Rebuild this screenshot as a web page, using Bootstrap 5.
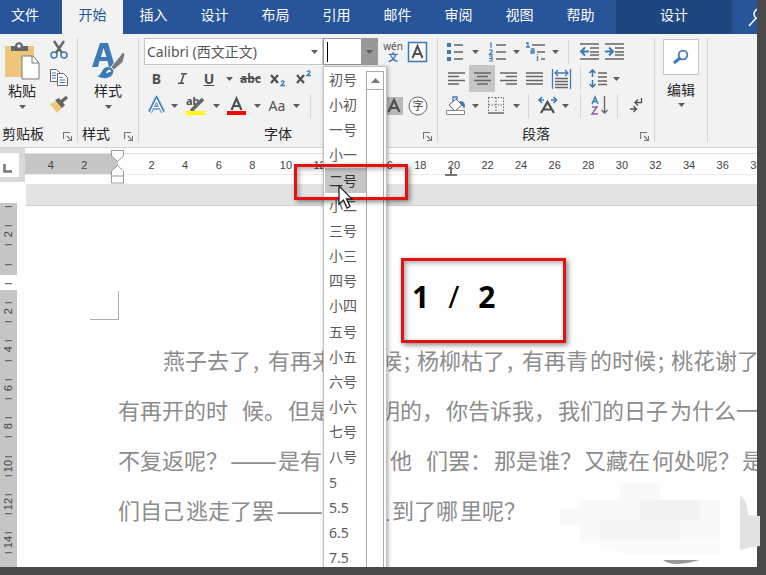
<!DOCTYPE html>
<html lang="zh-CN">
<head>
<meta charset="utf-8">
<meta name="viewport" content="width=device-width, initial-scale=1">
<title>文档</title>
<link href="https://cdn.jsdelivr.net/npm/bootstrap@5.3.0/dist/css/bootstrap.min.css" rel="stylesheet">
<script src="https://cdn.jsdelivr.net/npm/bootstrap@5.3.0/dist/js/bootstrap.bundle.min.js"></script>
<style>
body { font-family: "Noto Sans CJK SC", sans-serif; background: #494949; color: #262626; font-size: 14px; line-height: 20px; }
button { background: none; border: 0; padding: 0; color: inherit; display: flex; align-items: center; justify-content: center; }
svg { display: block; flex: none; overflow: visible; }
.app { margin: 0 9px 8px 0; background: #fefefe; }
/* tabs */
.tabs { background: #285599; height: 34px; }
.tabs a { color: #fff; flex: none; width: 61px; height: 34px; padding-top: 4px; text-align: center; text-decoration: none; }
.tabs a.first { width: 62px; padding-right: 12px; }
.tabs a.on { background: #f2f2f2; color: #285599; }
.tabs a.ctx { background: #1e477f; width: 116px; margin-left: 5px; }
/* ribbon */
.ribbon { background: #f2f2f2; height: 114px; border-bottom: 1px solid #d2d2d2; padding-top: 4px; }
.grp { border-right: 1px solid #d4d4d4; height: 104px; flex: none; }
.g-clip { width: 78px; } .g-style { width: 61px; } .g-font { width: 299px; } .g-para { width: 217px; } .g-edit { width: 53px; }
.tools { height: 82px; }
.big { width: 44px; height: 82px; flex-direction: column; justify-content: flex-start; padding-top: 4px; }
.big svg:last-child { margin-top: 5px; }
.side { width: 30px; gap: 10px; padding-top: 3px; }
.foot { height: 22px; padding: 3px 5px 0 2px; }
.foot span { line-height: 20px; }
.launch { height: 18px; align-items: flex-end; }
.trow { display: grid; height: 27px; align-items: center; padding-left: 5px; }
.trow button, .trow i { justify-self: center; }
.f2 { grid-template-columns: 25px 27px 26px 14px 29px 26px 26px; }
.f3 { grid-template-columns: 25px 11px 32px 9px 30px 12px 28px 10px 18px 63px 22px 28px; }
.p1 { grid-template-columns: 24px 16px 28px 10px 30px 8px 19px 22px 28px; }
.p2 { grid-template-columns: 26px 26px 26px 27px 26px 12px 23px 14px; }
.p3 { grid-template-columns: 26px 12px 30px 10px 15px 24px 10px 20px 18px 18px 20px; }
.vline { width: 1px; height: 24px; background: #d4d4d4; }
.ltr { font-family: "Noto Sans", sans-serif; color: #505050; font-size: 14px; line-height: 20px; }
.abc { font-size: 12px; }
.shade { background: #c6c6c6; width: 26px; height: 27px; }
.combo { height: 27px; background: #fff; border: 1px solid #c6c6c6; width: 179px; margin-left: 5px; }
.combo input { border: 0; outline: 0; background: none; width: 100%; min-width: 0; padding: 0 2px; color: #555; font-family: "Noto Sans", "Noto Sans CJK SC", sans-serif; font-size: 14px; }
.combo button { width: 16px; flex: none; }
.combo.size { width: 55px; margin: 0; border-color: #999; }
.combo.size button { background: #999; }
.caret-bar { position: absolute; left: 3px; top: 3px; width: 1px; height: 20px; background: #000; }
.phon { flex-direction: column; width: 30px; font-size: 10px; line-height: 11px; color: #505050; font-family: "Noto Sans", "Noto Sans CJK SC", sans-serif; }
.phon b { color: #3f7ab8; }
.find { width: 36px; height: 36px; background: #fff; border: 1px solid #c6c6c6; margin-top: 1px; }
/* rulers */
.rulers { height: 36px; }
.stop { width: 25px; height: 34px; background: #d9d9d9; padding: 5px 6px 5px 0; }
.stop span { background: #fefefe; height: 24px; padding: 11px 0 0 3px; display: block; }
.hruler { margin-top: 5px; height: 22px; border-top: 1px solid #dedede; border-bottom: 2px solid #ececec; font: 11px/22px "Liberation Sans", sans-serif; color: #444; }
.scale { margin-right: -16px; padding-left: 9px; height: 20px; background: linear-gradient(90deg, #c6c6c6 93px, #fefefe 93px); }
.scale span { flex: 1 1 0; text-align: center; }
.indent { left: 86px; top: -4px; }
.tabmark { left: 420px; top: 13px; }
.vruler { width: 17px; margin-top: 19px; padding-top: 3px; background: linear-gradient(#c6c6c6 72px, #fefefe 72px 87px, #c6c6c6 87px); font: 11px/17px "Liberation Sans", sans-serif; color: #444; margin-bottom: -4px; }
.vruler span { flex: 1 1 0; min-height: 0; writing-mode: vertical-rl; transform: rotate(180deg); text-align: center; background: linear-gradient(#555, #555) 5px 100% / 7px 1px no-repeat; }
.band { height: 22px; background: #e4e4e4; border-bottom: 1px solid #cfcfcf; }
.sheet { padding-left: 9px; }
.crop { width: 29px; height: 29px; border: solid #b0b0b0; border-width: 0 1px 1px 0; margin: 85px 0 0 64px; }
.pageno { font: 700 30px/40px "Noto Sans", sans-serif; color: #000; gap: 19px; margin: -43px 0 0 386px; }
.pageno span { font-weight: 400; }
.story { color: #8c8c8c; font-size: 22px; line-height: 50px; font-weight: 400; padding-left: 92px; margin-top: 17px; }
.story p { display: flex; gap: 2px; margin: 0; white-space: nowrap; height: 50px; }
.story .first-line { padding-left: 45px; }
.story i { font-style: normal; width: 13px; flex: none; }
.story i.semi { width: 11px; }
.story i.sp { width: 10px; }
.story .dash { width: 46px; flex: none; font-size: 28px; }
/* overlays */
.sizes { left: 323px; top: 66px; bottom: -4px; width: 64px; background: #fff; border: 1px solid #c0c0c0; box-shadow: 1px 1px 4px #0005; }
.sizes ul { margin: 0; padding: 0; width: 42px; list-style: none; display: flex; flex-direction: column; }
.sizes li { flex: 1 1 0; min-height: 0; padding-left: 4px; line-height: 25px; color: #5c5c5c; margin-left: 1px; font-family: "Noto Sans", "Noto Sans CJK SC", sans-serif; font-weight: 400; }
.sizes li.pick { background: #c6c6c6; color: #333; }
.bar { width: 18px; margin-top: 4px; border: 1px solid #aaa; }
.bar button { width: 16px; height: 18px; border-bottom: 1px solid #aaa; }
.ring { border: 3px solid #e3110f; box-shadow: 2px 2px 5px #0007, inset 2px 2px 5px #0005; }
.ring-a { left: 294px; top: 164px; width: 114px; height: 36px; }
.ring-b { left: 401px; top: 258px; width: 165px; height: 85px; }
.pointer { left: 338px; top: 185px; }
.smudge { right: 0; bottom: 0; }
.spill { right: 6px; bottom: 25px; }
</style>
</head>
<body class="vh-100 overflow-hidden d-flex flex-column position-relative">
<svg width="0" height="0" class="position-absolute">
<defs>
<symbol id="dn" viewBox="0 0 7 4"><path d="M0 0h7L3.500 4z" fill="#5c5c5c"/></symbol>
<symbol id="lc" viewBox="0 0 9 9"><path d="M.5 7V.5H7M4 4l4 4M8.500 4v4.500H4" fill="none" stroke="#777" stroke-width="1.200"/></symbol>
</defs>
</svg>
<div class="app flex-fill d-flex flex-column position-relative overflow-hidden">
<nav class="tabs d-flex flex-shrink-0 overflow-hidden">
<a class="first" href="#">文件</a><a class="on" href="#">开始</a><a href="#">插入</a><a href="#">设计</a><a href="#">布局</a><a href="#">引用</a><a href="#">邮件</a><a href="#">审阅</a><a href="#">视图</a><a href="#">帮助</a><a class="ctx" href="#">设计</a>
<button class="ms-3 flex-shrink-0" aria-label="搜索"><svg width="18" height="18" fill="none" stroke="#fff" stroke-width="1.500"><circle cx="11" cy="6" r="5"/><path d="M8 10l-7 8"/></svg></button>
</nav>

<div class="ribbon d-flex flex-shrink-0">
<section class="grp g-clip">
<div class="tools d-flex">
<button class="big"><svg width="34" height="38"><path d="M0 4h29v31H0z" fill="#edc57b"/><path d="M6 9V4h4c0-5 8-5 8 0h5v5z" fill="#666"/><circle cx="14" cy="4" r="1.800" fill="#f2f2f2"/><path d="M17 14h11l6 7v16H17z" fill="#fff" stroke="#777"/><path d="M27 14v7h7" fill="none" stroke="#777"/></svg><span>粘贴</span><svg width="7" height="4"><use href="#dn"/></svg></button>
<div class="side d-flex flex-column align-items-center">
<button aria-label="剪切"><svg width="18" height="18" fill="none"><path d="M4 0l8 12M14 0L6 12" stroke="#666" stroke-width="2.400"/><circle cx="4" cy="14" r="3" stroke="#3f7ab8" stroke-width="1.500"/><circle cx="14" cy="14" r="3" stroke="#3f7ab8" stroke-width="1.500"/></svg></button>
<button aria-label="复制"><svg width="18" height="17" fill="#fff" stroke="#666"><path d="M.5.5h6l3 3v9h-9z"/><path d="M2 4h4M2 6.500h4M2 9h4" stroke="#3f7ab8"/><path d="M7.500 4.500h6l4 4v8h-10z"/><path d="M9.500 8.500h3M9.500 11h6M9.500 13.500h6" stroke="#3f7ab8"/></svg></button>
<button aria-label="格式刷"><svg width="19" height="17"><path d="M0 8l7-3 6 6-6 6z" fill="#edc57b"/><path d="M5 4l4-2 6 7-3 3z" fill="#666"/><path d="M11 6l6-5" stroke="#666" stroke-width="3.500"/></svg></button>
</div>
</div>
<div class="foot d-flex justify-content-between"><span>剪贴板</span><button class="launch" aria-label="剪贴板设置"><svg width="9" height="9"><use href="#lc"/></svg></button></div>
</section>

<section class="grp g-style">
<div class="tools d-flex justify-content-center">
<button class="big"><svg width="34" height="38"><path fill-rule="evenodd" d="M9 1h8l7 24h-6l-1.500-6H8.500L7 25H1zM12.500 6L10 15h5.500z" fill="#3f7ab8"/><path d="M20 25L32 10l2 2-2 8-9 8z" fill="#7a7a7a" stroke="#f2f2f2"/><path d="M6 34c5 0 4-8 10-9 6 0 8 4 5 8-3 4-10 4-15 1z" fill="#3f7ab8"/><path d="M16 31c1-3 3-3 3-1" fill="none" stroke="#fff" stroke-width="2"/></svg><span>样式</span><svg width="7" height="4"><use href="#dn"/></svg></button>
</div>
<div class="foot d-flex justify-content-between ps-1"><span>样式</span><button class="launch" aria-label="样式设置"><svg width="9" height="9"><use href="#lc"/></svg></button></div>
</section>

<section class="grp g-font">
<div class="tools">
<div class="d-flex">
<div class="combo d-flex"><input aria-label="字体" value="Calibri (西文正文)"><button aria-label="选择字体"><svg width="7" height="4"><use href="#dn"/></svg></button></div>
<div class="combo size d-flex position-relative"><input aria-label="字号"><span class="caret-bar"></span><button aria-label="选择字号"><svg width="7" height="4"><use href="#dn"/></svg></button></div>
<button class="phon" aria-label="拼音指南"><span>wén</span><b>文</b></button>
<button aria-label="字符边框"><svg width="20" height="20"><path d="M.5.5h18v19H.5z" fill="#f8f8f8" stroke="#3f7ab8" stroke-width="1.500"/><path d="M4.500 16L9.500 4l5 12M6.500 12h6" fill="none" stroke="#505050" stroke-width="2"/></svg></button>
</div>
<div class="trow f2">
<button class="ltr"><b>B</b></button><button class="ltr fw-bold" aria-label="倾斜"><svg width="11" height="11"><path d="M4 .7h6M1 10.300h6M7 1L4 10" stroke="#505050" stroke-width="1.500"/></svg></button><button class="ltr fw-bold text-decoration-underline">U</button><button aria-label="下划线"><svg width="7" height="4"><use href="#dn"/></svg></button>
<button class="ltr"><s class="fw-bold abc">abc</s></button>
<button aria-label="下标"><svg width="16" height="16" fill="none"><path d="M1 4l7 8M8 4l-7 8" stroke="#505050" stroke-width="2.200"/><path d="M11 11c1-2 3-1 3 0s-2 2-3 3.500h4" stroke="#3f7ab8" stroke-width="1.300"/></svg></button>
<button aria-label="上标"><svg width="16" height="16" fill="none"><path d="M1 4l7 8M8 4l-7 8" stroke="#505050" stroke-width="2.200"/><path d="M11 1c1-2 3-1 3 0s-2 2-3 3.500h4" stroke="#3f7ab8" stroke-width="1.300"/></svg></button>
</div>
<div class="trow f3">
<button aria-label="文本效果"><svg width="17" height="17"><path d="M2 15L8.500 2 15 15M5 10.500h7" fill="none" stroke="#a9c8e8" stroke-width="5" stroke-linejoin="round"/><path d="M2 15L8.500 2 15 15M5 10.500h7" fill="none" stroke="#3f7ab8" stroke-width="3.500"/><path d="M2.500 15L8.500 3l6 12M5 10.500h7" fill="none" stroke="#fff" stroke-width="1.500"/></svg></button>
<button aria-label="更多文本效果"><svg width="7" height="4"><use href="#dn"/></svg></button>
<button aria-label="突出显示"><svg width="20" height="20"><text x="0" y="9" font-family="Noto Sans" font-size="11" font-weight="700" fill="#505050">ab</text><path d="M17 3l-9 9-3 3" stroke="#666" stroke-width="3.500"/><path d="M0 15h19v4H0z" fill="#ff0"/></svg></button>
<button aria-label="突出显示颜色"><svg width="7" height="4"><use href="#dn"/></svg></button>
<button aria-label="字体颜色"><svg width="19" height="20"><path d="M4.500 14L9.500 2.500 14.500 14M6.500 10h6" fill="none" stroke="#505050" stroke-width="2.200"/><path d="M0 15h19v4H0z" fill="#f00"/></svg></button>
<button aria-label="选择字体颜色"><svg width="7" height="4"><use href="#dn"/></svg></button>
<button class="ltr">Aa</button><button aria-label="更改大小写"><svg width="7" height="4"><use href="#dn"/></svg></button>
<i class="vline"></i><i></i>
<button aria-label="字符底纹"><svg width="20" height="18"><path d="M0 0h20v18H0z" fill="#b9b9b9"/><path d="M5.500 15L11 3l5.500 12M7.500 11h7" fill="none" stroke="#505050" stroke-width="2.200"/></svg></button>
<button aria-label="带圈字符"><svg width="20" height="20"><circle cx="10" cy="10" r="9" fill="#fafafa" stroke="#666"/><text x="10" y="14" text-anchor="middle" font-family="Noto Sans CJK SC" font-size="11" fill="#444">字</text></svg></button>
</div>
</div>
<div class="foot d-flex justify-content-between"><span class="flex-fill text-center pe-2">字体</span><button class="launch" aria-label="字体设置"><svg width="9" height="9"><use href="#lc"/></svg></button></div>
</section>

<section class="grp g-para">
<div class="tools">
<div class="trow p1">
<button aria-label="项目符号"><svg width="16" height="18"><path d="M0 0h4v4H0zM0 7h4v4H0zM0 14h4v4H0z" fill="#3f7ab8"/><path d="M7 2h9M7 9h9M7 16h9" stroke="#666" stroke-width="1.300"/></svg></button>
<button aria-label="项目符号库"><svg width="7" height="4"><use href="#dn"/></svg></button>
<button aria-label="编号"><svg width="17" height="20"><path d="M1 1h1v5M0 8h3v2L.5 12.500H4M0 14h3v5H0M0 16.500h3" fill="none" stroke="#3f7ab8" stroke-width="1.200"/><path d="M7 3h10M7 10h10M7 17h10" stroke="#666" stroke-width="1.300"/></svg></button>
<button aria-label="编号库"><svg width="7" height="4"><use href="#dn"/></svg></button>
<button aria-label="多级列表"><svg width="20" height="20"><path d="M0 1h2v4M0 5h4M5 7h3v4H5V9h3M11.500 14v5M11.500 12v1" fill="none" stroke="#3f7ab8" stroke-width="1.300"/><path d="M6 3h13M11 10h8M15 17h4" stroke="#666" stroke-width="1.300"/></svg></button>
<button aria-label="列表库"><svg width="7" height="4"><use href="#dn"/></svg></button>
<i class="vline"></i>
<button aria-label="减少缩进"><svg width="19" height="17"><path d="M0 1h19M10 5h9M10 9h9M10 12h9M0 16h19" stroke="#666" stroke-width="1.300"/><path d="M9 8.500H1M5 4.500l-4 4 4 4" fill="none" stroke="#3f7ab8" stroke-width="2"/></svg></button>
<button aria-label="增加缩进"><svg width="19" height="17"><path d="M0 1h19M10 5h9M10 9h9M10 12h9M0 16h19" stroke="#666" stroke-width="1.300"/><path d="M0 8.500h8M4 4.500l4 4-4 4" fill="none" stroke="#3f7ab8" stroke-width="2"/></svg></button>
</div>
<div class="trow p2">
<button aria-label="左对齐"><svg width="17" height="13"><path d="M0 1h17M0 4.500h11M0 8.500h17M0 12h11" stroke="#666" stroke-width="1.300"/></svg></button>
<button class="shade" aria-label="居中"><svg width="17" height="13"><path d="M0 1h17M3 4.500h11M0 8.500h17M3 12h11" stroke="#666" stroke-width="1.300"/></svg></button>
<button aria-label="右对齐"><svg width="17" height="13"><path d="M0 1h17M6 4.500h11M0 8.500h17M6 12h11" stroke="#666" stroke-width="1.300"/></svg></button>
<button aria-label="两端对齐"><svg width="17" height="13"><path d="M0 1h17M0 4.500h17M0 8.500h17M0 12h17" stroke="#666" stroke-width="1.300"/></svg></button>
<button aria-label="分散对齐"><svg width="19" height="20"><path d="M.5 0v20M18.500 0v20M3 4h13M6 1L3 4l3 3M13 1l3 3-3 3" fill="none" stroke="#3f7ab8" stroke-width="1.300"/><path d="M3 9.500h13M3 12.500h13M3 15.500h13M3 18.500h13" stroke="#666" stroke-width="1.300"/></svg></button>
<i class="vline"></i>
<button aria-label="行距"><svg width="18" height="19"><path d="M3.500 1v7M.5 4l3-3 3 3M3.500 11v7M.5 15l3 3 3-3" fill="none" stroke="#3f7ab8" stroke-width="1.600"/><path d="M9 4h9M9 8h9M9 12h9M9 15.500h9" stroke="#666" stroke-width="1.300"/></svg></button>
<button aria-label="行距选项"><svg width="7" height="4"><use href="#dn"/></svg></button>
</div>
<div class="trow p3">
<button aria-label="底纹"><svg width="20" height="19"><path d="M7 6V1h4v7" fill="none" stroke="#3f7ab8" stroke-width="1.300"/><path d="M3 9l7-6 6 6-7 6z" fill="#fff" stroke="#666"/><path d="M14 5c5 0 6 4 4 8-1-3-2-4-4-5z" fill="#3f7ab8"/><path d="M.5 14.500h18v4H.5z" fill="#fff" stroke="#888"/></svg></button>
<button aria-label="底纹颜色"><svg width="7" height="4"><use href="#dn"/></svg></button>
<button aria-label="边框"><svg width="16" height="17" fill="none" stroke="#666"><path d="M.5.500V15M8 .5V15M15.500.500V15M.5.500h15M.5 8h15" stroke-dasharray="1.500 1.500"/><path d="M0 16h16" stroke-width="1.500"/></svg></button>
<button aria-label="边框选项"><svg width="7" height="4"><use href="#dn"/></svg></button>
<i class="vline"></i>
<button aria-label="中文版式"><svg width="20" height="17"><path d="M3 16l6.500-11L16 16M5.500 12.500h8" fill="none" stroke="#505050" stroke-width="2.200"/><path d="M6 3H1M4 0L1 3l3 3M13 3h5M15.500 0l3 3-3 3" fill="none" stroke="#3f7ab8" stroke-width="1.600"/></svg></button>
<button aria-label="中文版式选项"><svg width="7" height="4"><use href="#dn"/></svg></button>
<i class="vline"></i>
<button aria-label="排序"><svg width="17" height="19" fill="none"><path d="M1 8l3-7 3 7M2 5.500h4" stroke="#3f7ab8" stroke-width="1.500"/><path d="M1 11h5l-5 7h6" stroke="#8f5fb5" stroke-width="1.500"/><path d="M13.500 0v17M10.500 14l3 3 3-3" stroke="#666" stroke-width="1.400"/></svg></button>
<i class="vline"></i>
<button aria-label="显示编辑标记"><svg width="13" height="15" fill="none" stroke="#505050" stroke-width="1.300"><path d="M11.500 0v4.500H5M8 1.500l-3 3 3 3M0 11h6M3.500 8l3 3-3 3"/></svg></button>
</div>
</div>
<div class="foot d-flex justify-content-between"><span class="flex-fill text-center pe-2">段落</span><button class="launch" aria-label="段落设置"><svg width="9" height="9"><use href="#lc"/></svg></button></div>
</section>

<section class="grp g-edit d-flex flex-column align-items-center">
<button class="find" aria-label="查找"><svg width="17" height="15" fill="none" stroke="#3f7ab8"><circle cx="10" cy="5" r="4.300" stroke-width="1.800"/><path d="M7 8l-6 5" stroke-width="3"/></svg></button>
<button class="flex-column mt-1 gap-1"><span>编辑</span><svg width="7" height="4"><use href="#dn"/></svg></button>
</section>
</div>

<div class="rulers d-flex flex-shrink-0">
<div class="stop"><span><svg width="9" height="9"><path d="M1.500 0v7.500H9" fill="none" stroke="#777" stroke-width="2.500"/></svg></span></div>
<div class="hruler flex-fill position-relative">
<div class="scale d-flex"><span>4</span><span>2</span><span></span><span>2</span><span>4</span><span>6</span><span>8</span><span>10</span><span>12</span><span>14</span><span>16</span><span>18</span><span>20</span><span>22</span><span>24</span><span>26</span><span>28</span><span>30</span><span>32</span><span>34</span><span>36</span><span>38</span></div>
<svg class="indent position-absolute" width="14" height="34" fill="#fff" stroke="#999"><path d="M.5.500h12V6l-6 5.500-6-5.500zM6.500 15.500l6 5.500v5H.5v-5zM.5 26v7h12v-7"/></svg>
<svg class="tabmark position-absolute" width="12" height="9"><path d="M6 0v7M0 8h12" stroke="#777" stroke-width="2"/></svg>
</div>
</div>

<div class="flex-fill d-flex">
<div class="vruler d-flex flex-column flex-shrink-0"><span></span><span>2</span><span></span><span></span><span></span><span>2</span><span></span><span>4</span><span></span><span>6</span><span></span><span>8</span><span></span><span>10</span><span></span><span>12</span><span></span><span>14</span><span></span></div>
<main class="sheet flex-fill overflow-hidden">
<div class="band"></div>
<div class="crop"></div>
<div class="pageno d-flex">1<span>/</span>2</div>
<article class="story">
<p class="first-line"><span>燕子去了</span><i>,</i><span>有再来</span><span>的时候</span><i class="semi">;</i><span>杨柳枯了</span><i>,</i><span>有再青</span><span>的时候</span><i class="semi">;</i><span>桃花谢了</span></p>
<p><span>有再开的时</span><i class="sp"></i><span>候。</span><span>但是，</span><span>聪明的，</span><span>你告诉我，</span><span>我们的日子</span><span>为什么一</span></p>
<p><span>不复返呢？</span><span class="dash">——</span><span>是有人</span><span>偷了他</span><i class="sp"></i><span>们罢：</span><span>那是谁？</span><span>又藏在</span><span>何处呢？</span><span>是</span></p>
<p><span>们自己</span><span>逃走了罢</span><span class="dash">——</span><span>如今又</span><span>到了哪</span><span>里呢？</span></p>
</article>
</main>
</div>

<div class="sizes position-absolute d-flex">
<ul><li>初号</li><li>小初</li><li>一号</li><li>小一</li><li class="pick">二号</li><li>小二</li><li>三号</li><li>小三</li><li>四号</li><li>小四</li><li>五号</li><li>小五</li><li>六号</li><li>小六</li><li>七号</li><li>八号</li><li>5</li><li>5.5</li><li>6.5</li><li>7.5</li></ul>
<div class="bar"><button aria-label="向上滚动"><svg width="9" height="5"><path d="M0 5h9L4.500 0z" fill="#777"/></svg></button></div>
</div>
<div class="ring ring-a position-absolute"></div>
<div class="ring ring-b position-absolute"></div>
<svg class="pointer position-absolute" width="15" height="24"><path d="M1 1v18l4.500-4 3.500 8 3-1.500-3.500-7.500H14z" fill="#fff" stroke="#222" stroke-width="1.300"/></svg>
<svg class="smudge position-absolute" width="197" height="84"><path d="M60 0h40v17h60v42H20V42H0V26h20V17h40z" fill="#f8f8f8"/><path d="M80 17h60v20H80z" fill="#f3f3f3"/><path d="M40 37h80v20H40z" fill="#f5f5f5"/><path d="M20 57h140v14H68z" fill="#fafafa"/><path d="M103 77h37q-10 3-22 4-10 0-15-4z" fill="#999"/></svg>
</div>
<svg class="spill position-absolute" width="20" height="55"><path d="M0 0q8 6 8 20l12 1v30q-12 1-20 4z" fill="#e2e2e2"/></svg>
</body>
</html>
